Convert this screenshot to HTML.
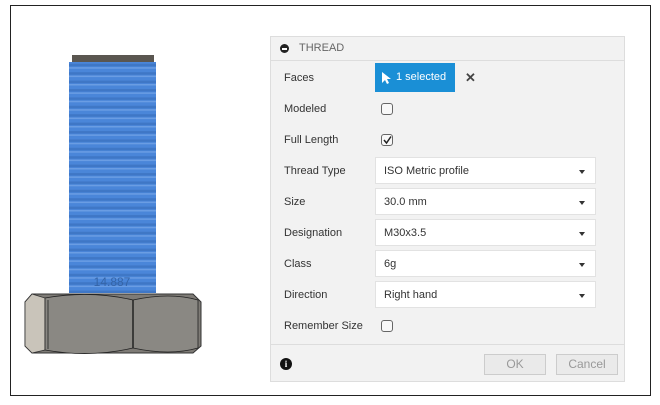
<!DOCTYPE html>
<html><head><style>
*{margin:0;padding:0;box-sizing:border-box}
body{width:660px;height:405px;background:#fff;font-family:"Liberation Sans",sans-serif;position:relative;overflow:hidden}
.frame{position:absolute;left:10px;top:5px;width:641px;height:391px;border:1.5px solid #222}
.dlg{position:absolute;left:270px;top:36px;width:355px;height:346px;background:#f2f2f2;border:1px solid #ddd}
.hdr{height:24px;border-bottom:1px solid #ddd;font-size:11px;color:#666;line-height:23px;padding-left:28px;position:relative}
.hdr:before{content:"";position:absolute;left:9px;top:7px;width:9px;height:9px;border-radius:50%;background:#222}
.hdr:after{content:"";position:absolute;left:11px;top:11px;width:5px;height:1.5px;background:#fff}
.lbl{position:absolute;left:13px;font-size:11px;color:#333}
.dd{position:absolute;left:104px;width:221px;height:27px;background:#fff;border:1px solid #e2e2e2;font-size:11px;color:#333;line-height:27px;padding-left:8px}
.dd:after{content:"";position:absolute;right:10px;top:12px;border-left:3px solid transparent;border-right:3px solid transparent;border-top:4px solid #333}
.cb{position:absolute;left:110px;width:12px;height:12px;border:1.5px solid #666;border-radius:3px;background:#f8f8f8}
.btn{position:absolute;top:317px;height:21px;border:1px solid #ccc;background:#eaeaea;color:#999;font-size:12px;text-align:center;line-height:19px}
</style></head><body>
<div class="frame"></div>
<svg style="position:absolute;left:0;top:0" width="260" height="400">
<defs><pattern id="th" width="10" height="8.4" patternUnits="userSpaceOnUse"><rect width="10" height="8.4" fill="#4a86d9"/><rect y="5" width="10" height="2.5" fill="#3f77c6"/><rect y="0" width="10" height="1.5" fill="#6a9de3"/></pattern></defs>
<rect x="72" y="55" width="82" height="7" fill="#5a5650"/>
<rect x="69" y="62" width="87" height="231" fill="url(#th)"/>
<text x="112" y="286" font-size="12" fill="#3565a8" text-anchor="middle" font-family="Liberation Sans">14.887</text>
<path d="M32 294 L193 294 L201 302 L201 346 L193 353 L32 353 L25 346 L25 302 Z" fill="#7e7b76" stroke="#333" stroke-width="1"/>
<path d="M25 302 L32 294 L45 298 L45 350 L32 353 L25 346 Z" fill="#c9c4ba" stroke="#333" stroke-width="0.8"/>
<path d="M45 298 Q90 290 133 300 Q170 292 198 300 L198 348 Q170 356 133 348 Q90 358 45 350 Z" fill="#8a8883" stroke="#222" stroke-width="0.8"/>
<line x1="133" y1="300" x2="133" y2="348" stroke="#222" stroke-width="1.5"/>
<line x1="48" y1="300" x2="48" y2="349" stroke="#222" stroke-width="0.8"/>
</svg>
<div class="dlg">
<div class="hdr">THREAD</div>
<div class="lbl" style="top:35px">Faces</div>
<div style="position:absolute;left:104px;top:26px;width:80px;height:29px;background:#1a8fd6;color:#fff;font-size:11px;line-height:29px;padding-left:21px">1 selected</div>
<svg style="position:absolute;left:110px;top:34px" width="10" height="14"><path d="M1 1 L1 12 L4 9 L6 13 L8 12 L6 8 L10 8 Z" fill="#fff"/></svg>
<div style="position:absolute;left:194px;top:33px;font-size:13px;font-weight:bold;color:#444">✕</div>
<div class="lbl" style="top:66px">Modeled</div>
<div class="cb" style="top:66px"></div>
<div class="lbl" style="top:97px">Full Length</div>
<div class="cb" style="top:97px"></div>
<svg style="position:absolute;left:111px;top:98px" width="11" height="11"><path d="M2 5 L4.5 8 L9 1.5" stroke="#222" stroke-width="1.5" fill="none"/></svg>
<div class="lbl" style="top:128px">Thread Type</div><div class="dd" style="top:120px">ISO Metric profile</div>
<div class="lbl" style="top:159px">Size</div><div class="dd" style="top:151px">30.0 mm</div>
<div class="lbl" style="top:190px">Designation</div><div class="dd" style="top:182px">M30x3.5</div>
<div class="lbl" style="top:221px">Class</div><div class="dd" style="top:213px">6g</div>
<div class="lbl" style="top:252px">Direction</div><div class="dd" style="top:244px">Right hand</div>
<div class="lbl" style="top:283px">Remember Size</div>
<div class="cb" style="top:283px"></div>
<div style="position:absolute;left:0;right:0;top:307px;border-top:1px solid #ddd"></div>
<div style="position:absolute;left:9px;top:321px;width:12px;height:12px;border-radius:50%;background:#111;color:#fff;font-size:9px;font-weight:bold;text-align:center;line-height:12px;font-family:'Liberation Serif',serif">i</div>
<div class="btn" style="left:213px;width:62px">OK</div>
<div class="btn" style="left:285px;width:62px">Cancel</div>
</div>
</body></html>
